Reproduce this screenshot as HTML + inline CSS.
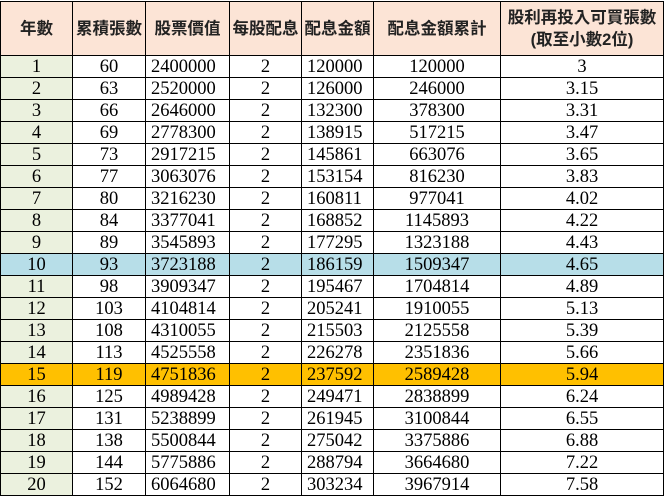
<!DOCTYPE html>
<html><head><meta charset="utf-8"><style>
html,body{margin:0;padding:0;background:#fff;width:664px;height:496px;overflow:hidden}
table{border-collapse:collapse;table-layout:fixed;width:663px;margin-top:1px;font-family:"Liberation Serif","Noto Serif CJK SC",serif;font-size:18.5px;color:#000}
td{border:1px solid #000;height:21px;padding:0;text-align:center;line-height:20px;white-space:nowrap;overflow:hidden}
tr.h td{height:53px;background:#fce4d6;font-family:"Liberation Sans","Noto Sans CJK TC",sans-serif;font-weight:bold;font-size:16.5px;line-height:22px;color:#222}
td.y{background:#ebf1de}
tr.b td{background:#b7dee8}
tr.o td{background:#ffc000}
td.l{text-align:left;padding-left:5px}
</style></head><body>
<table>
<colgroup><col style="width:72px"><col style="width:73px"><col style="width:84px"><col style="width:72px"><col style="width:72px"><col style="width:127px"><col style="width:163px"></colgroup>
<tr class="h"><td>年數</td><td>累積張數</td><td>股票價值</td><td>每股配息</td><td>配息金額</td><td>配息金額累計</td><td>股利再投入可買張數<br>(取至小數2位)</td></tr>
<tr><td class="y">1</td><td>60</td><td class="l">2400000</td><td>2</td><td class="l">120000</td><td>120000</td><td>3</td></tr>
<tr><td class="y">2</td><td>63</td><td class="l">2520000</td><td>2</td><td class="l">126000</td><td>246000</td><td>3.15</td></tr>
<tr><td class="y">3</td><td>66</td><td class="l">2646000</td><td>2</td><td class="l">132300</td><td>378300</td><td>3.31</td></tr>
<tr><td class="y">4</td><td>69</td><td class="l">2778300</td><td>2</td><td class="l">138915</td><td>517215</td><td>3.47</td></tr>
<tr><td class="y">5</td><td>73</td><td class="l">2917215</td><td>2</td><td class="l">145861</td><td>663076</td><td>3.65</td></tr>
<tr><td class="y">6</td><td>77</td><td class="l">3063076</td><td>2</td><td class="l">153154</td><td>816230</td><td>3.83</td></tr>
<tr><td class="y">7</td><td>80</td><td class="l">3216230</td><td>2</td><td class="l">160811</td><td>977041</td><td>4.02</td></tr>
<tr><td class="y">8</td><td>84</td><td class="l">3377041</td><td>2</td><td class="l">168852</td><td>1145893</td><td>4.22</td></tr>
<tr><td class="y">9</td><td>89</td><td class="l">3545893</td><td>2</td><td class="l">177295</td><td>1323188</td><td>4.43</td></tr>
<tr class="b"><td>10</td><td>93</td><td class="l">3723188</td><td>2</td><td class="l">186159</td><td>1509347</td><td>4.65</td></tr>
<tr><td class="y">11</td><td>98</td><td class="l">3909347</td><td>2</td><td class="l">195467</td><td>1704814</td><td>4.89</td></tr>
<tr><td class="y">12</td><td>103</td><td class="l">4104814</td><td>2</td><td class="l">205241</td><td>1910055</td><td>5.13</td></tr>
<tr><td class="y">13</td><td>108</td><td class="l">4310055</td><td>2</td><td class="l">215503</td><td>2125558</td><td>5.39</td></tr>
<tr><td class="y">14</td><td>113</td><td class="l">4525558</td><td>2</td><td class="l">226278</td><td>2351836</td><td>5.66</td></tr>
<tr class="o"><td>15</td><td>119</td><td class="l">4751836</td><td>2</td><td class="l">237592</td><td>2589428</td><td>5.94</td></tr>
<tr><td class="y">16</td><td>125</td><td class="l">4989428</td><td>2</td><td class="l">249471</td><td>2838899</td><td>6.24</td></tr>
<tr><td class="y">17</td><td>131</td><td class="l">5238899</td><td>2</td><td class="l">261945</td><td>3100844</td><td>6.55</td></tr>
<tr><td class="y">18</td><td>138</td><td class="l">5500844</td><td>2</td><td class="l">275042</td><td>3375886</td><td>6.88</td></tr>
<tr><td class="y">19</td><td>144</td><td class="l">5775886</td><td>2</td><td class="l">288794</td><td>3664680</td><td>7.22</td></tr>
<tr><td class="y">20</td><td>152</td><td class="l">6064680</td><td>2</td><td class="l">303234</td><td>3967914</td><td>7.58</td></tr>
</table>
</body></html>
